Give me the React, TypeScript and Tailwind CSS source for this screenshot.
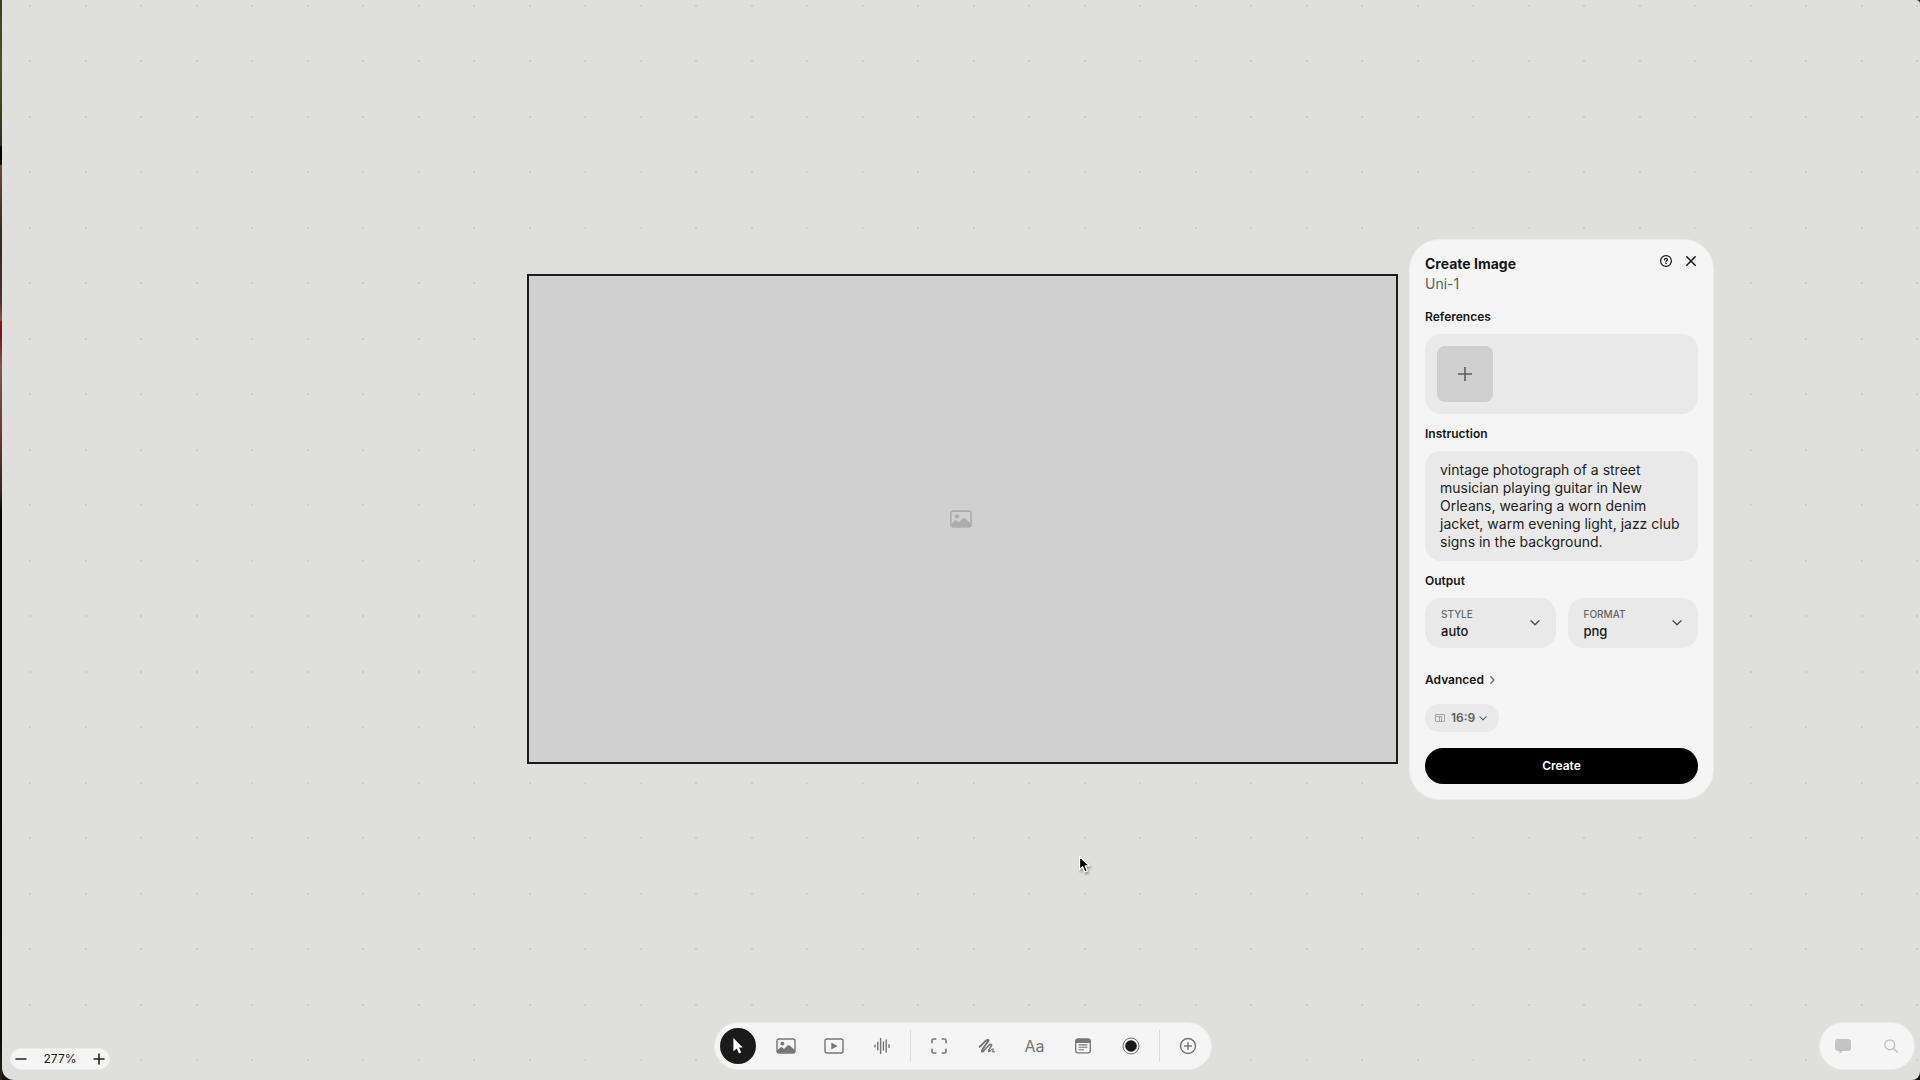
import type { ReactNode } from "react";

function Chevron({ className }: { className: string }) {
  return (
    <svg viewBox="0 0 10 6" className={className} fill="none" stroke="currentColor" strokeWidth="1.3" strokeLinecap="round" strokeLinejoin="round" aria-hidden="true">
      <path d="M1 0.8 5 4.8 9 0.8" />
    </svg>
  );
}

function ImageIcon({ className }: { className: string }) {
  return (
    <svg viewBox="0 0 20 16" className={className} fill="none" aria-hidden="true">
      <rect x="1" y="1" width="18" height="14" rx="2" stroke="currentColor" strokeWidth="1.4" />
      <circle cx="6.4" cy="5.6" r="1.9" fill="currentColor" />
      <path d="M1.2 12.2 4.6 9.4Q5.4 8.8 6.2 9.4L8 10.9 11.6 7.6Q12.6 6.8 13.6 7.6L18.8 12V13.5Q18.8 14.8 17.4 14.8H2.6Q1.2 14.8 1.2 13.5Z" fill="currentColor" />
    </svg>
  );
}

function ToolButton({ label, children, active = false }: { label: string; children: ReactNode; active?: boolean }) {
  return (
    <button
      type="button"
      aria-label={label}
      className={
        active
          ? "flex size-9 items-center justify-center rounded-full bg-[#1a1a1a] text-white"
          : "flex size-9 items-center justify-center rounded-full text-[#757575]"
      }
    >
      {children}
    </button>
  );
}

function Divider() {
  return <div className="h-8 w-px bg-[#dcdcdc]" />;
}

function OutputSelect({ id, label, value }: { id: string; label: string; value: string }) {
  return (
    <div className="relative flex h-[50px] flex-1 flex-col justify-center rounded-2xl bg-[#e9e9e9] pl-4">
      <label htmlFor={id} className="text-[10px] leading-4 font-medium text-[#666666] uppercase">
        {label}
      </label>
      <select id={id} defaultValue={value} className="w-full appearance-none bg-transparent text-[13px] leading-[18px] font-medium text-[#161616] outline-none">
        <option>{value}</option>
      </select>
      <Chevron className="pointer-events-none absolute top-[22px] right-4 h-[6px] w-[10px] text-[#4a4a4a]" />
    </div>
  );
}

function CreatePanel() {
  return (
    <form className="absolute top-[239px] left-[1407px] flex w-[305px] flex-col rounded-[30px] border border-[#ebebea] bg-[#f5f5f5] px-[15px] pt-[14px] pb-[15px] text-[#161616]">
      <div className="flex items-start justify-between">
        <div>
          <h1 className="text-sm leading-5 font-bold">Create Image</h1>
          <p className="text-sm leading-5 text-[#606060]">Uni-1</p>
        </div>
        <div className="flex items-center gap-3 pr-px">
          <button type="button" aria-label="Help">
            <svg viewBox="0 0 14 14" className="size-[14px]" fill="none" stroke="currentColor" strokeWidth="1.2" strokeLinecap="round">
              <circle cx="7" cy="7" r="5.4" />
              <path d="M5.5 5.8Q5.6 4.4 7 4.4T8.5 5.6Q8.5 6.3 7.7 6.8T7 7.9" />
              <circle cx="7" cy="9.6" r="0.3" fill="currentColor" strokeWidth="0.8" />
            </svg>
          </button>
          <button type="button" aria-label="Close">
            <svg viewBox="0 0 12 12" className="size-[12px]" stroke="currentColor" strokeWidth="1.5" strokeLinecap="round">
              <path d="M1.8 1.8 10.2 10.2M10.2 1.8 1.8 10.2" />
            </svg>
          </button>
        </div>
      </div>

      <h2 className="mt-[13px] text-xs leading-5 font-semibold">References</h2>
      <div className="mt-[7px] rounded-2xl bg-[#e9e9e9] p-3">
        <button type="button" aria-label="Add reference" className="flex size-14 items-center justify-center rounded-lg bg-[#cfcfcf] text-[#5c5c5c]">
          <svg viewBox="0 0 14 14" className="size-[14px]" stroke="currentColor" strokeWidth="1.6">
            <path d="M7 0V14M0 7H14" />
          </svg>
        </button>
      </div>

      <label htmlFor="instruction" className="mt-[10px] text-xs leading-5 font-semibold">
        Instruction
      </label>
      <textarea
        id="instruction"
        rows={5}
        className="mt-[7px] block w-full resize-none overflow-hidden rounded-2xl bg-[#e9e9e9] px-[15px] py-[10px] text-sm leading-[18px] text-[#222222] outline-none"
        defaultValue="vintage photograph of a street musician playing guitar in New Orleans, wearing a worn denim jacket, warm evening light, jazz club signs in the background."
      />

      <h2 className="mt-[10px] text-xs leading-5 font-semibold">Output</h2>
      <div className="mt-[7px] flex gap-3">
        <OutputSelect id="style" label="Style" value="auto" />
        <OutputSelect id="format" label="Format" value="png" />
      </div>

      <button type="button" className="mt-[22px] flex items-center gap-[6px] self-start text-xs leading-5 font-semibold">
        Advanced
        <svg viewBox="0 0 5 8" className="h-[8px] w-[5px] text-[#666666]" fill="none" stroke="currentColor" strokeWidth="1.3" strokeLinecap="round" strokeLinejoin="round">
          <path d="M0.8 0.8 4 4 0.8 7.2" />
        </svg>
      </button>

      <div className="mt-[14px] flex h-7 items-center self-start rounded-full bg-[#e9e9e9] pr-[12px] pl-[10px] text-[#606060]">
        <svg viewBox="0 0 10 8" className="h-[8px] w-[10px] text-[#a3a3a3]" fill="none" stroke="currentColor">
          <rect x="0.5" y="0.5" width="9" height="7" rx="0.5" />
          <path d="M0.5 2.5H6.5M4.5 2.5V7.5M6.5 2.5V7.5" />
        </svg>
        <select aria-label="Aspect ratio" defaultValue="16:9" className="ml-[6px] w-[28px] appearance-none bg-transparent text-xs leading-5 font-semibold outline-none">
          <option>16:9</option>
        </select>
        <Chevron className="h-[5px] w-[8px]" />
      </div>

      <button type="submit" className="mt-4 h-9 rounded-full bg-black text-xs font-semibold text-white">
        Create
      </button>
    </form>
  );
}

function Toolbar() {
  return (
    <nav aria-label="Tools" className="flex items-center gap-[10px] rounded-full border border-[#ebebea] bg-[#f5f5f5] p-[5px]">
      <div className="flex gap-3">
        <ToolButton label="Select" active>
          <svg viewBox="0 0 12 18" className="h-[18px] w-[12px]" fill="currentColor">
            <path d="M1.4 1 10.8 10.6H7L9.2 15.4 7 16.4 4.8 11.5 1.4 14.2Z" />
          </svg>
        </ToolButton>
        <ToolButton label="Image">
          <ImageIcon className="h-[16px] w-[20px]" />
        </ToolButton>
        <ToolButton label="Video">
          <svg viewBox="0 0 20 16" className="h-[16px] w-[20px]" fill="none">
            <rect x="1" y="1" width="18" height="14" rx="2" stroke="currentColor" strokeWidth="1.4" />
            <path d="M7.6 5V11L13.2 8Z" fill="currentColor" stroke="currentColor" strokeWidth="0.5" strokeLinejoin="round" />
          </svg>
        </ToolButton>
        <ToolButton label="Audio">
          <svg viewBox="0 0 16 18" className="h-[18px] w-[16px]" stroke="currentColor" strokeWidth="1.4" strokeLinecap="round">
            <path d="M1 8V10M3.8 5.2V12.8M6.6 1.4V16.6M9.4 5V13M12.2 3V15M15 7.6V10.4" />
          </svg>
        </ToolButton>
      </div>
      <Divider />
      <div className="flex gap-3">
        <ToolButton label="Frame">
          <svg viewBox="0 0 16 16" className="size-4" fill="none" stroke="currentColor" strokeWidth="1.6" strokeLinecap="round">
            <path d="M1 4.8V2.6Q1 1 2.6 1H4.8M11.2 1H13.4Q15 1 15 2.6V4.8M15 11.2V13.4Q15 15 13.4 15H11.2M4.8 15H2.6Q1 15 1 13.4V11.2" />
          </svg>
        </ToolButton>
        <ToolButton label="Draw">
          <svg viewBox="0 0 18 16" className="h-[16px] w-[18px]" fill="none" stroke="currentColor" strokeLinecap="round" strokeLinejoin="round">
            <path d="M1.6 8.8C4.4 6.6 7.2 2.2 10 1.6 12.4 1.8 5 9.6 4 12.4 3.6 14 4.6 13.8 5.6 12.8" strokeWidth="1.9" />
            <path d="M5.6 12.8C8 10.4 10.8 6.4 13 6.2 15 6.8 11 11 10.6 12.8 10.4 13.8 11.2 13.6 12 13" strokeWidth="1.5" />
            <path d="M12 13C13.4 11.8 14.6 10.4 15.2 10.8 15.8 11.4 14.2 13 14.6 13.8 15 14.4 15.8 14 16.4 13.6" strokeWidth="1.1" />
          </svg>
        </ToolButton>
        <ToolButton label="Text">
          <span className="text-base leading-5">Aa</span>
        </ToolButton>
        <ToolButton label="Note">
          <svg viewBox="0 0 16 16" className="size-4" fill="none" stroke="currentColor">
            <rect x="0.7" y="1.2" width="14.6" height="13.6" rx="2" strokeWidth="1.3" />
            <path d="M1 4.4V2.6Q1 1 2.6 1H13.4Q15 1 15 2.6V4.4Z" fill="currentColor" />
            <path d="M3.6 6.9H12.4M3.6 9.3H12.4M3.6 11.7H9" strokeWidth="1.1" />
          </svg>
        </ToolButton>
        <ToolButton label="Color">
          <svg viewBox="0 0 18 18" className="size-[18px]">
            <circle cx="9" cy="9" r="8" fill="none" stroke="currentColor" />
            <circle cx="9" cy="9" r="5.8" fill="#1a1a1a" />
          </svg>
        </ToolButton>
      </div>
      <Divider />
      <ToolButton label="Add">
        <svg viewBox="0 0 18 18" className="size-[18px]" fill="none" stroke="currentColor" strokeWidth="1.4" strokeLinecap="round">
          <circle cx="9" cy="9" r="7.5" />
          <path d="M9 5.6V12.4M5.6 9H12.4" />
        </svg>
      </ToolButton>
    </nav>
  );
}

function ZoomControl() {
  return (
    <div className="flex h-[22px] w-[100px] items-center justify-between justify-self-start rounded-full border border-[#ebebea] bg-[#f5f5f5] px-1 text-[#222222]">
      <button type="button" aria-label="Zoom out">
        <svg viewBox="0 0 12 12" className="size-3" stroke="currentColor" strokeWidth="1.6">
          <path d="M0.5 6H11.5" />
        </svg>
      </button>
      <span className="text-xs leading-5">277%</span>
      <button type="button" aria-label="Zoom in">
        <svg viewBox="0 0 12 12" className="size-3" stroke="currentColor" strokeWidth="1.6">
          <path d="M0.5 6H11.5M6 0.5V11.5" />
        </svg>
      </button>
    </div>
  );
}

export default function App() {
  return (
    <div className="flex h-screen w-full overflow-hidden bg-[#15110d] font-['Inter',sans-serif]">
      <div className="w-[2px] shrink-0 bg-[linear-gradient(to_bottom,#3a3f1c_0%,#4a5228_6%,#3c4318_10%,#2b2d28_13.5%,#000000_13.6%,#000000_15.2%,#6b4a38_15.3%,#2e2a22_22%,#4a3232_28%,#8a5050_29.6%,#8a1518_29.8%,#7a1020_31%,#7a5a5a_34%,#6a3a36_40%,#2c2420_45.8%,#050505_47.4%,#0a0a0a_96%,#2a2018_100%)]" />
      <main className="relative flex-1 overflow-hidden rounded-tr-sm rounded-br-lg rounded-bl-xl bg-[#dfdfdd] bg-[radial-gradient(circle_at_28px_6px,#cececc_1px,transparent_1px),radial-gradient(circle_at_84px_6px,#cececc_1px,transparent_1px),radial-gradient(circle_at_28px_61px,#cececc_1px,transparent_1px),radial-gradient(circle_at_84px_61px,#cececc_1px,transparent_1px)] bg-size-[111px_111px]">
        <div className="absolute top-[274px] left-[525px] flex aspect-video w-[871px] items-center justify-center border-2 border-[#1c1c1c] bg-[#d0d0d0] pr-[3px]">
          <ImageIcon className="h-[18px] w-[24px] text-[#adadad]" />
        </div>

        <CreatePanel />

        <svg viewBox="0 0 14 20" className="pointer-events-none absolute top-[855px] left-[1076px] h-[20px] w-[14px] drop-shadow-[1px_2px_1px_rgba(0,0,0,0.35)]" aria-hidden="true">
          <path d="M1.5 1.5V14.6L4.6 11.8 6.8 17 9.4 15.9 7.2 10.9H11.4Z" fill="#000000" stroke="#ffffff" strokeWidth="1.3" strokeLinejoin="round" />
        </svg>

        <div className="absolute inset-x-0 bottom-[10px] grid grid-cols-[1fr_auto_1fr] items-end pr-[5px] pl-2">
          <ZoomControl />
          <Toolbar />
          <div className="flex h-12 items-center gap-3 justify-self-end rounded-full border border-[#ebebea] bg-[#f5f5f5] px-[5px] text-[#c4c4c4]">
            <button type="button" aria-label="Comments" className="flex size-9 items-center justify-center">
              <svg viewBox="0 0 16 15" className="h-[15px] w-[16px]" fill="currentColor">
                <path d="M3 0H13Q16 0 16 3V9Q16 12 13 12H7.6L4.4 15V12H3Q0 12 0 9V3Q0 0 3 0Z" />
              </svg>
            </button>
            <button type="button" aria-label="Search" className="flex size-9 items-center justify-center">
              <svg viewBox="0 0 14 14" className="size-[14px]" fill="none" stroke="currentColor" strokeWidth="1.5" strokeLinecap="round">
                <circle cx="5.8" cy="5.8" r="4.9" />
                <path d="M9.4 9.4 13.2 13.2" />
              </svg>
            </button>
          </div>
        </div>
      </main>
    </div>
  );
}
